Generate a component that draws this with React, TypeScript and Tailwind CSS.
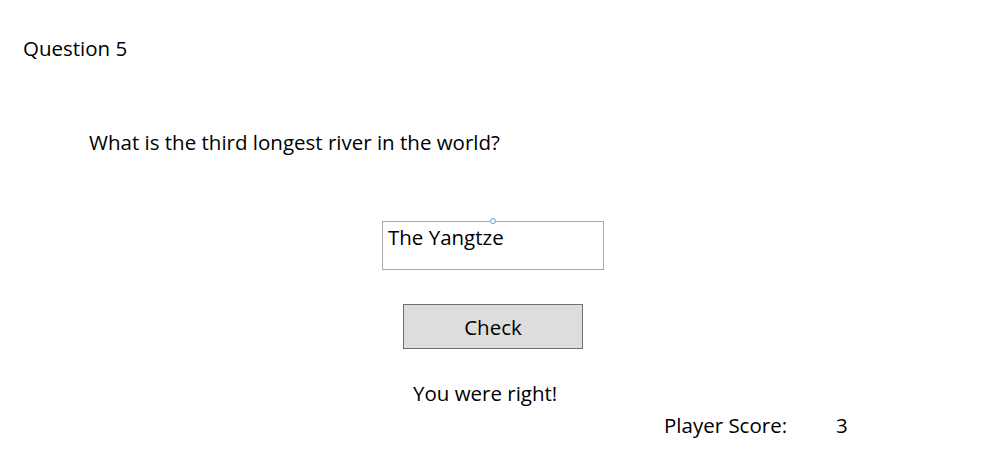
export default function App() {
  return (
    <div
      className="w-[988px] h-[468px] bg-white text-black flex flex-col"
      style={{ fontFamily: '"Open Sans", "Noto Sans", sans-serif' }}
    >
      <div className="mt-[34px] ml-[23px] h-[28px] text-[20.5px] leading-[28px]">Question 5</div>
      <div className="mt-[66px] ml-[89px] h-[28px] text-[20.5px] leading-[28px]">
        What is the third longest river in the world?
      </div>
      <div className="mt-[65px] ml-[382px] relative w-[222px] h-[49px] border border-[#a8a8a8] bg-white">
        <div className="absolute left-[107px] -top-[4px] w-[6px] h-[6px] rounded-full border border-[#6f9be0] bg-white" />
        <div className="pl-[5px] pt-[1px] text-[20.5px] leading-[28px]">The Yangtze</div>
      </div>
      <div className="mt-[34px] ml-[403px] w-[180px] h-[45px] border border-[#707070] bg-[#dddddd] flex items-center justify-center text-[20.5px] leading-[28px]">
        Check
      </div>
      <div className="mt-[30px] ml-[413px] h-[28px] text-[20.5px] leading-[28px]">You were right!</div>
      <div className="mt-[4px] ml-[664px] h-[28px] flex text-[20.5px] leading-[28px]">
        <span className="w-[172px]">Player Score:</span>
        <span>3</span>
      </div>
    </div>
  );
}
